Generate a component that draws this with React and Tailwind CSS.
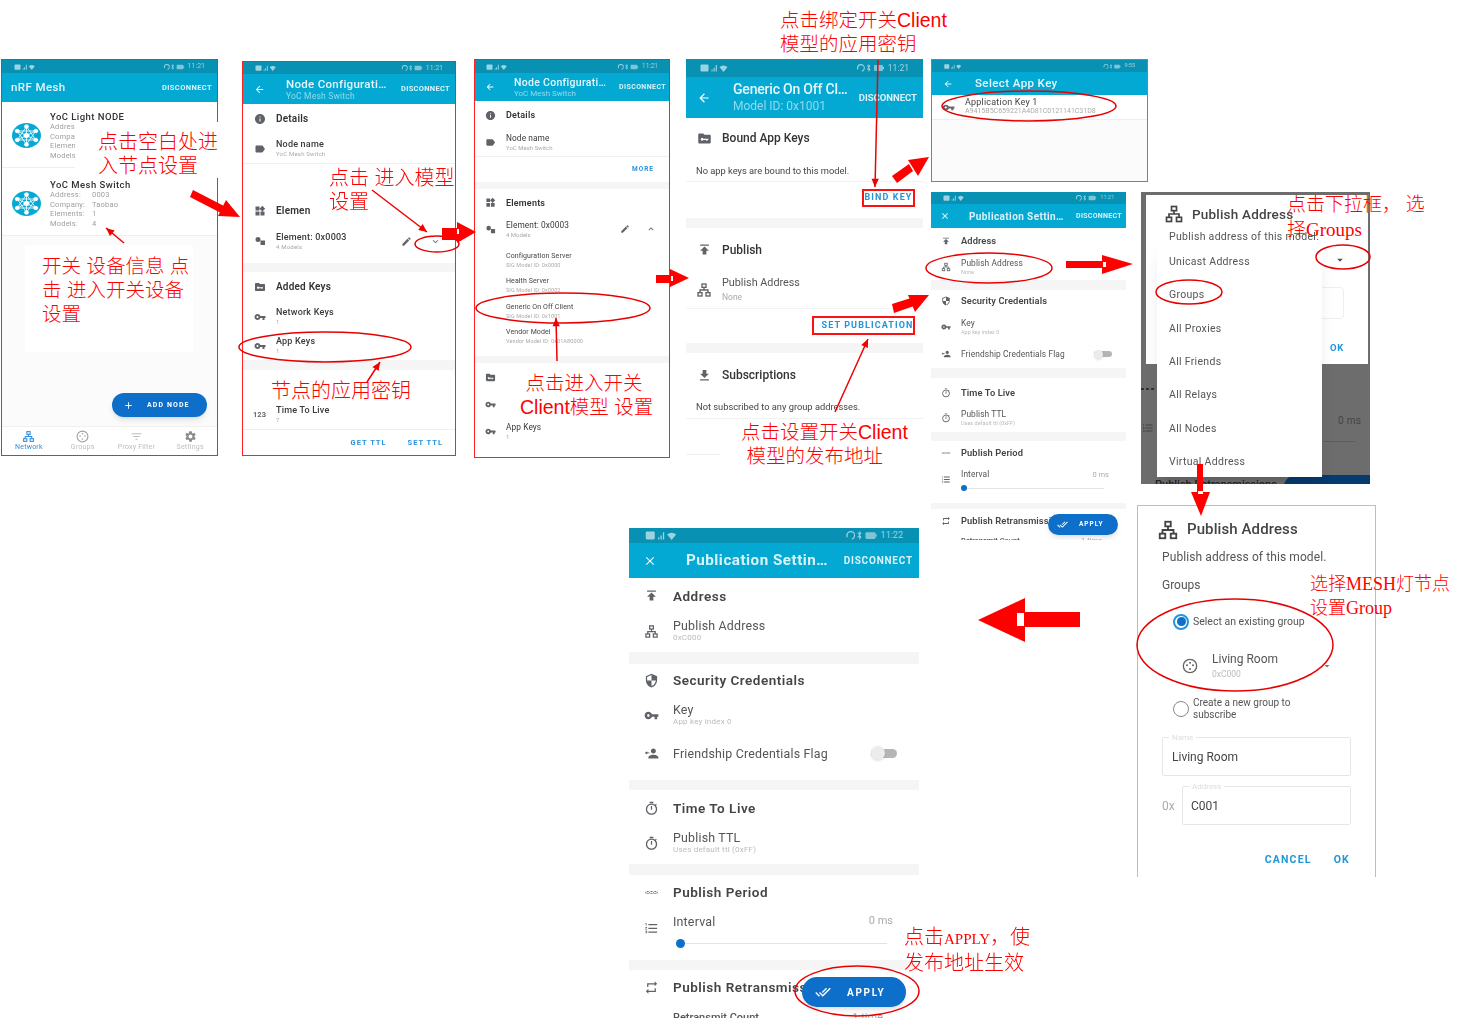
import React from 'react';

const P = {
    info: 'M12 2C6.48 2 2 6.48 2 12s4.48 10 10 10 10-4.48 10-10S17.52 2 12 2zm1 15h-2v-6h2v6zm0-8h-2V7h2v2z',
    label: 'M17.63 5.84C17.27 5.33 16.67 5 16 5L5 5.01C3.9 5.01 3 5.9 3 7v10c0 1.1.9 1.99 2 1.99L16 19c.67 0 1.27-.33 1.63-.84L22 12l-4.37-6.16z',
    widgets: 'M13 13v8h8v-8h-8zM3 21h8v-8H3v8zM3 3v8h8V3H3zm13.66-1.31L11 7.34 16.66 13l5.66-5.66-5.66-5.65z',
    folder: 'M10 4H4c-1.1 0-2 .9-2 2v12c0 1.1.9 2 2 2h16c1.1 0 2-.9 2-2V8c0-1.1-.9-2-2-2h-8l-2-2zM8 11a2.2 2.2 0 0 1 2.1 1.5H18v2h-1.5V16H15v-1.5h-4.9A2.2 2.2 0 1 1 8 11z',
    key: 'M12.65 10C11.83 7.67 9.61 6 7 6c-3.31 0-6 2.69-6 6s2.69 6 6 6c2.61 0 4.83-1.67 5.65-4H17v4h4v-4h2v-4H12.65zM7 14c-1.1 0-2-.9-2-2s.9-2 2-2 2 .9 2 2-.9 2-2 2z',
    pencil: 'M3 17.25V21h3.75L17.81 9.94l-3.75-3.75L3 17.25zM20.71 7.04c.39-.39.39-1.02 0-1.41l-2.34-2.34c-.39-.39-1.02-.39-1.41 0l-1.83 1.83 3.75 3.75 1.83-1.83z',
    down: 'M16.59 8.59L12 13.17 7.41 8.59 6 10l6 6 6-6z',
    drop: 'M7 10l5 5 5-5z',
    up: 'M12 8l-6 6 1.41 1.41L12 10.83l4.59 4.58L18 14z',
    publish: 'M5 4v2h14V4H5zm0 10h4v6h6v-6h4l-7-7-7 7z',
    getApp: 'M19 9h-4V3H9v6H5l7 7 7-7zM5 18v2h14v-2H5z',
    shield: 'M12 1L3 5v6c0 5.55 3.84 10.74 9 12 5.16-1.26 9-6.45 9-12V5l-9-4zm0 10.99h7c-.53 4.12-3.28 7.79-7 8.94V12H5V6.3l7-3.11v8.8z',
    timer: 'M15 1H9v2h6V1zm-4 13h2V8h-2v6zm8.03-6.61l1.42-1.42c-.43-.51-.9-.99-1.41-1.41l-1.42 1.42C16.07 4.74 14.12 4 12 4c-4.97 0-9 4.03-9 9s4.02 9 9 9 9-4.03 9-9c0-2.12-.74-4.07-1.97-5.61zM12 20c-3.87 0-7-3.13-7-7s3.13-7 7-7 7 3.13 7 7-3.13 7-7 7z',
    list: 'M2 17h2v.5H3v1h1v.5H2v1h3v-4H2v1zm1-9h1V4H2v1h1v3zm-1 3h1.8L2 13.1v.9h3v-1H3.2L5 10.9V10H2v1zm5-6v2h14V5H7zm0 14h14v-2H7v2zm0-6h14v-2H7v2z',
    repeat: 'M7 7h10v3l4-4-4-4v3H5v6h2V7zm10 10H7v-3l-4 4 4 4v-3h12v-6h-2v4z',
    done: 'M18 7l-1.41-1.41-6.34 6.34 1.41 1.41L18 7zm4.24-1.41L11.66 16.17 7.48 12l-1.41 1.41L11.66 19l12-12-1.42-1.41zM.41 13.41L6 19l1.41-1.41L1.83 12 .41 13.41z',
    back: 'M20 11H7.83l5.59-5.59L12 4l-8 8 8 8 1.41-1.41L7.83 13H20v-2z',
    close: 'M19 6.41L17.59 5 12 10.59 6.41 5 5 6.41 10.59 12 5 17.59 6.41 19 12 13.41 17.59 19 19 17.59 13.41 12z',
    add: 'M19 13h-6v6h-2v-6H5v-2h6V5h2v6h6v2z',
    filter: 'M10 18h4v-2h-4v2zM3 6v2h18V6H3zm3 7h12v-2H6v2z',
    gear: 'M19.14 12.94c.04-.3.06-.61.06-.94 0-.32-.02-.64-.07-.94l2.03-1.58c.18-.14.23-.41.12-.61l-1.92-3.32c-.12-.22-.37-.29-.59-.22l-2.39.96c-.5-.38-1.03-.7-1.62-.94l-.36-2.54c-.04-.24-.24-.41-.48-.41h-3.84c-.24 0-.43.17-.47.41l-.36 2.54c-.59.24-1.13.57-1.62.94l-2.39-.96c-.22-.08-.47 0-.59.22L2.74 8.87c-.12.21-.08.47.12.61l2.03 1.58c-.05.3-.09.63-.09.94s.02.64.07.94l-2.03 1.58c-.18.14-.23.41-.12.61l1.92 3.32c.12.22.37.29.59.22l2.39-.96c.5.38 1.03.7 1.62.94l.36 2.54c.05.24.24.41.48.41h3.84c.24 0 .44-.17.47-.41l.36-2.54c.59-.24 1.13-.56 1.62-.94l2.39.96c.22.08.47 0 .59-.22l1.92-3.32c.12-.22.07-.47-.12-.61l-2.01-1.58zM12 15.6c-1.98 0-3.6-1.62-3.6-3.6s1.62-3.6 3.6-3.6 3.6 1.62 3.6 3.6-1.62 3.6-3.6 3.6z',
    friend: 'M15 12c2.21 0 4-1.79 4-4s-1.79-4-4-4-4 1.79-4 4 1.79 4 4 4zM15 14c-2.67 0-8 1.34-8 4v2h16v-2c0-2.66-5.33-4-8-4zM4 9a2 2 0 0 1 1.9 1.3H9v1.4H5.9A2 2 0 1 1 4 9z',
    dots: 'M2 11h20v2H2zM6 9.5a2.5 2.5 0 1 0 0 5 2.5 2.5 0 0 0 0-5zM12 9.5a2.5 2.5 0 1 0 0 5 2.5 2.5 0 0 0 0-5zM18 9.5a2.5 2.5 0 1 0 0 5 2.5 2.5 0 0 0 0-5z',
    element: 'M8 4a5 5 0 1 0 0 10 5 5 0 0 0 0-10zM13 11h9v9h-9z',
};

function Ic({ d, c }) {
    return (
        <svg viewBox="0 0 24 24" fill="currentColor" className={c} preserveAspectRatio="none">
            <path d={d} />
        </svg>
    );
}

function Lan({ c }) {
    return (
        <svg viewBox="0 0 24 24" fill="none" stroke="currentColor" strokeWidth="2" className={c}>
            <rect x="9" y="3" width="6" height="5" />
            <rect x="3" y="16" width="6" height="5" />
            <rect x="15" y="16" width="6" height="5" />
            <path d="M12 8v4M6 16v-4h12v4" />
        </svg>
    );
}

function Bubble({ c }) {
    return (
        <svg viewBox="0 0 24 24" fill="none" stroke="currentColor" strokeWidth="2" className={c}>
            <circle cx="12" cy="12" r="10" />
            <circle cx="7.5" cy="11" r="1.5" fill="currentColor" stroke="none" />
            <circle cx="16.5" cy="11" r="1.5" fill="currentColor" stroke="none" />
            <circle cx="12" cy="16.5" r="1.5" fill="currentColor" stroke="none" />
            <circle cx="12" cy="7" r="1.5" fill="currentColor" stroke="none" />
        </svg>
    );
}

function MeshIcon() {
    const pts = [[50, 14], [82, 32], [82, 68], [50, 86], [18, 68], [18, 32]];
    return (
        <svg viewBox="0 0 100 100" preserveAspectRatio="none" className="w-[29px] h-[25px] shrink-0">
            <circle cx="50" cy="50" r="50" fill="#06a9d3" />
            <g stroke="#fff" strokeWidth="3" fill="#fff">
                {pts.map((p, i) => (
                    <g key={i}>
                        <line x1="50" y1="50" x2={p[0]} y2={p[1]} />
                        <line x1={p[0]} y1={p[1]} x2={pts[(i + 2) % 6][0]} y2={pts[(i + 2) % 6][1]} />
                        <circle cx={p[0]} cy={p[1]} r="7" />
                    </g>
                ))}
                <circle cx="50" cy="50" r="9" />
            </g>
        </svg>
    );
}

function StatusBar({ c, icons, text, time }) {
    return (
        <div className={'flex items-center justify-between shrink-0 bg-[#0891b2] text-white/60 ' + c}>
            <svg viewBox="0 0 28 8" fill="currentColor" className={icons}>
                <rect x="0" y="0.5" width="8" height="7" rx="1" />
                <path d="M11 7.5h1v-2h-1zM13 7.5h1.2V4H13zM15.2 7.5h1.2V1h-1.2z" />
                <path d="M19 3a6 6 0 0 1 8 0l-4 5z" />
            </svg>
            <div className="flex items-center gap-[3px]">
                <svg viewBox="0 0 27 8" fill="currentColor" className={icons}>
                    <path d="M4 0a3.8 3.8 0 0 1 3.8 4c0 2-1.2 3.5-3 3.8V6.7c1-.3 2-1.3 2-2.7a2.8 2.8 0 0 0-5.6 0v1.6H0V4a4 4 0 0 1 4-4z" />
                    <path d="M11.5 0l2 2-1.4 1.6 1.4 1.8-2 2.6V4.8L10 6V5l1.5-1.4L10 2V1l1.5 1.3z" />
                    <rect x="17" y="1" width="9" height="6" rx="1" opacity="0.8" />
                    <rect x="26" y="3" width="1" height="2" />
                </svg>
                <span className={'leading-none ' + text}>{time}</span>
            </div>
        </div>
    );
}

function Disconnect({ c }) {
    return <span className={'font-bold text-white/85 leading-none shrink-0 ' + c}>DISCONNECT</span>;
}

function Band({ c }) {
    return <div className={'bg-[#f5f5f5] shrink-0 ' + c} />;
}

// a list row: icon column, then title and optional small line
function Row({ h, col, icon, title, sub, tc, sc, children }) {
    return (
        <div className={'flex items-center shrink-0 ' + h}>
            <div className={'flex justify-center shrink-0 text-[#5f6368] ' + col}>{icon}</div>
            <div className="flex-1 min-w-0 whitespace-nowrap">
                <div className={tc}>{title}</div>
                {sub && <div className={sc}>{sub}</div>}
            </div>
            {children}
        </div>
    );
}

function Note({ c, children }) {
    return <div className={'absolute text-[#ff0000] font-light whitespace-pre font-["Liberation_Sans","Noto_Sans_CJK_SC",sans-serif] ' + c}>{children}</div>;
}

function NodeRow({ name, lines, c }) {
    return (
        <div className={'flex shrink-0 border-b border-[#eeeeee] ' + c}>
            <div className="w-[46px] pl-[10px] shrink-0 pt-[11px]">
                <MeshIcon />
            </div>
            <div className="pl-[2px]">
                <div className="text-[9.5px] font-medium leading-[10px] text-[#333] tracking-[0.45px] whitespace-nowrap">{name}</div>
                {lines.map((l) => (
                    <div key={l[0]} className="flex text-[7.5px] leading-[9.7px] text-[#9e9e9e] tracking-[0.2px]">
                        <span className="w-[42px] shrink-0">{l[0]}</span>
                        <span>{l[1]}</span>
                    </div>
                ))}
            </div>
        </div>
    );
}

function NavItem({ icon, label, c }) {
    return (
        <div className={'flex flex-1 flex-col items-center pt-[3px] ' + c}>
            {icon}
            <span className="text-[7px] leading-[8px] tracking-[0.2px]">{label}</span>
        </div>
    );
}

function ScreenOne() {
    return (
        <div className="absolute left-[1px] top-[59px] w-[217px] h-[397px] border-[1.5px] border-[#ff2020] bg-white flex flex-col overflow-hidden">
            <div className="flex flex-col flex-1 blur-[0.35px] min-h-0">
                <StatusBar c="h-[13px] px-[12px]" icons="h-[6px] w-[22px]" text="text-[7px]" time="11:21" />
                <div className="h-[29px] shrink-0 bg-[#03a9d3] flex items-center justify-between pl-[9px] pr-[5px]">
                    <span className="text-[11.5px] font-medium text-white/90 tracking-[0.4px]">nRF Mesh</span>
                    <Disconnect c="text-[7.5px] tracking-[0.4px]" />
                </div>
                <NodeRow
                    name="YoC Light NODE"
                    c="h-[66px] pt-[10px]"
                    lines={[['Addres', ''], ['Compa', ''], ['Elemen', ''], ['Models', '']]}
                />
                <NodeRow
                    name="YoC Mesh Switch"
                    c="h-[68px] pt-[12px]"
                    lines={[['Address:', '0003'], ['Company:', 'Taobao'], ['Elements:', '1'], ['Models:', '4']]}
                />
                <div className="flex-1 bg-[#fbfbfb]" />
                <div className="h-[29px] shrink-0 flex bg-white border-t border-[#f0f0f0]">
                    <NavItem c="text-[#2f8fe0]" label="Network" icon={<Lan c="w-[13px] h-[13px]" />} />
                    <NavItem c="text-[#bdbdbd]" label="Groups" icon={<Bubble c="w-[13px] h-[13px] text-[#9e9e9e]" />} />
                    <NavItem c="text-[#bdbdbd]" label="Proxy Filter" icon={<Ic d={P.filter} c="w-[13px] h-[13px]" />} />
                    <NavItem c="text-[#bdbdbd]" label="Settings" icon={<Ic d={P.gear} c="w-[13px] h-[13px] text-[#8a8a8a]" />} />
                </div>
            </div>
            <div className="absolute left-[110px] top-[333px] w-[95px] h-[24px] rounded-full bg-[#0d6fc9] shadow-md flex items-center text-white blur-[0.35px]">
                <Ic d={P.add} c="w-[11px] h-[11px] ml-[11px]" />
                <span className="ml-[13px] text-[7px] font-bold tracking-[1.1px]">ADD NODE</span>
            </div>
        </div>
    );
}

const smallRow = {
    col: 'w-[33px]',
    tc: 'text-[9px] leading-[10px] text-[#3a3a3a] font-medium tracking-[0.2px]',
    sc: 'text-[6px] leading-[9px] text-[#a8a8a8] tracking-[0.2px]',
    head: 'text-[10px] leading-[10px] text-[#333] font-semibold tracking-[0.2px]',
};

function SmallBar({ title, sub }) {
    return (
        <div className="shrink-0 flex items-center bg-[#03a9d3] h-[30px] pl-[11px] pr-[5px] text-white">
            <Ic d={P.back} c="w-[11px] h-[11px] shrink-0" />
            <div className="flex-1 pl-[21px] text-white/90">
                <div className="text-[11.5px] leading-[13px] font-medium tracking-[0.3px]">{title}</div>
                <div className="text-[8.5px] leading-[10px] text-white/55 tracking-[0.2px]">{sub}</div>
            </div>
            <Disconnect c="text-[7.5px] tracking-[0.3px]" />
        </div>
    );
}

function ScreenTwo() {
    const s = smallRow;
    const ic = 'w-[12px] h-[12px]';
    return (
        <div className="absolute left-[242px] top-[61px] w-[214px] h-[395px] border-[1.5px] border-[#ff2020] bg-white overflow-hidden">
            <div className="flex flex-col h-full blur-[0.35px]">
                <StatusBar c="h-[12px] px-[12px]" icons="h-[6px] w-[22px]" text="text-[7px]" time="11:21" />
                <SmallBar title="Node Configurati…" sub="YoC Mesh Switch" />
                <Row h="h-[30px]" col={s.col} tc={s.head} title="Details" icon={<Ic d={P.info} c={ic} />} />
                <Row h="h-[30px] border-b border-[#f0f0f0]" col={s.col} tc={s.tc} sc={s.sc} title="Node name" sub="YoC Mesh Switch" icon={<Ic d={P.label} c={ic} />} />
                <div className="h-[32px] shrink-0" />
                <Row h="h-[30px]" col={s.col} tc={s.head} title="Elemen" icon={<Ic d={P.widgets} c={ic} />} />
                <Row h="h-[30px]" col={s.col} tc={s.tc} sc={s.sc} title="Element: 0x0003" sub="4 Models" icon={<Ic d={P.element} c={ic} />}>
                    <Ic d={P.pencil} c="w-[11px] h-[11px] text-[#666] mr-[18px]" />
                    <Ic d={P.down} c="w-[11px] h-[11px] text-[#666] mr-[14px]" />
                </Row>
                <div className="h-[7px] shrink-0" />
                <Band c="h-[9px]" />
                <Row h="h-[30px]" col={s.col} tc={s.head} title="Added Keys" icon={<Ic d={P.folder} c={ic} />} />
                <Row h="h-[29px]" col={s.col} tc={s.tc} sc={s.sc} title="Network Keys" sub="1" icon={<Ic d={P.key} c={ic} />} />
                <Row h="h-[29px]" col={s.col} tc={s.tc} sc={s.sc} title="App Keys" sub="1" icon={<Ic d={P.key} c={ic} />} />
                <Band c="h-[10px]" />
                <div className="h-[30px] shrink-0" />
                <Row h="h-[30px] border-b border-[#f0f0f0]" col={s.col} tc={s.tc} sc={s.sc} title="Time To Live" sub="7" icon={<span className="text-[7.5px] font-bold text-[#666]">123</span>} />
                <div className="h-[25px] shrink-0 flex items-center justify-end pr-[12px] gap-[21px] text-[7.5px] font-bold tracking-[1px] text-[#2a93dc]">
                    <span>GET TTL</span>
                    <span>SET TTL</span>
                </div>
            </div>
        </div>
    );
}

function Model({ title, sub }) {
    return (
        <div className="h-[25.3px] shrink-0 pl-[31px] whitespace-nowrap">
            <div className="text-[7px] leading-[9px] text-[#444] tracking-[0.1px]">{title}</div>
            <div className="text-[5.5px] leading-[8px] text-[#aaa] tracking-[0.1px]">{sub}</div>
        </div>
    );
}

function ScreenThree() {
    const s = {
        col: 'w-[31px]',
        tc: 'text-[8.3px] leading-[10px] text-[#3a3a3a] tracking-[0.1px]',
        head: 'text-[9px] leading-[10px] text-[#333] font-semibold tracking-[0.2px]',
        sc: 'text-[6px] leading-[9px] text-[#a8a8a8]',
    };
    const ic = 'w-[11px] h-[11px]';
    return (
        <div className="absolute left-[474px] top-[59px] w-[196px] h-[399px] border-[1.5px] border-[#ff2020] bg-white overflow-hidden">
            <div className="flex flex-col h-full blur-[0.35px]">
                <StatusBar c="h-[13px] px-[11px]" icons="h-[6px] w-[22px]" text="text-[6.5px]" time="11:21" />
                <div className="shrink-0 flex items-center bg-[#03a9d3] h-[28px] pl-[10px] pr-[3px] text-white">
                    <Ic d={P.back} c="w-[10px] h-[10px] shrink-0" />
                    <div className="flex-1 pl-[19px] text-white/90">
                        <div className="text-[10.5px] leading-[12px] font-medium tracking-[0.3px]">Node Configurati…</div>
                        <div className="text-[8px] leading-[9px] text-white/55">YoC Mesh Switch</div>
                    </div>
                    <Disconnect c="text-[7px] tracking-[0.4px]" />
                </div>
                <Row h="h-[28px]" col={s.col} tc={s.head} title="Details" icon={<Ic d={P.info} c={ic} />} />
                <Row h="h-[28px] border-b border-[#f0f0f0]" col={s.col} tc={s.tc} sc={s.sc} title="Node name" sub="YoC Mesh Switch" icon={<Ic d={P.label} c={ic} />} />
                <div className="h-[25px] shrink-0 flex items-center justify-end pr-[15px] text-[6.5px] font-bold tracking-[1px] text-[#2a93dc]">MORE</div>
                <Band c="h-[7px]" />
                <Row h="h-[27px]" col={s.col} tc={s.head} title="Elements" icon={<Ic d={P.widgets} c={ic} />} />
                <Row h="h-[26px]" col={s.col} tc={s.tc} sc={s.sc} title="Element: 0x0003" sub="4 Models" icon={<Ic d={P.element} c={ic} />}>
                    <Ic d={P.pencil} c="w-[10px] h-[10px] text-[#666] mr-[16px]" />
                    <Ic d={P.up} c="w-[10px] h-[10px] text-[#666] mr-[13px]" />
                </Row>
                <div className="h-[10px] shrink-0" />
                <Model title="Configuration Server" sub="SIG Model ID: 0x0000" />
                <Model title="Health Server" sub="SIG Model ID: 0x0002" />
                <Model title="Generic On Off Client" sub="SIG Model ID: 0x1001" />
                <Model title="Vendor Model" sub="Vendor Model ID: 0x01A80000" />
                <div className="h-[3px] shrink-0" />
                <Band c="h-[7px]" />
                <Row h="h-[28px]" col={s.col} tc={s.head} title="" icon={<Ic d={P.folder} c={ic} />} />
                <Row h="h-[27px]" col={s.col} tc={s.tc} title="" icon={<Ic d={P.key} c={ic} />} />
                <Row h="h-[26px]" col={s.col} tc={s.tc} sc={s.sc} title="App Keys" sub="1" icon={<Ic d={P.key} c={ic} />} />
            </div>
        </div>
    );
}

function ScreenFour() {
    const col = 'w-[36px]';
    const head = 'text-[12px] leading-[14px] font-medium text-[#333]';
    const ic = 'w-[15px] h-[15px]';
    return (
        <div className="absolute left-[686px] top-[59px] w-[237px] h-[402px] bg-white overflow-hidden flex flex-col blur-[0.35px]">
            <StatusBar c="h-[18px] px-[14px]" icons="h-[8px] w-[29px]" text="text-[8.5px]" time="11:21" />
            <div className="h-[41px] shrink-0 bg-[#03a9d3] flex items-center pl-[11px] pr-[6px] text-white">
                <Ic d={P.back} c="w-[14px] h-[14px] shrink-0" />
                <div className="flex-1 min-w-0 pl-[22px] whitespace-nowrap">
                    <div className="text-[14px] leading-[17px] font-medium text-white/90 tracking-[-0.2px]">Generic On Off Cl…</div>
                    <div className="text-[12px] leading-[16px] text-white/55">Model ID: 0x1001</div>
                </div>
                <Disconnect c="text-[9.5px]" />
            </div>
            <Row h="h-[40px]" col={col} tc={head} title="Bound App Keys" icon={<Ic d={P.folder} c={ic} />} />
            <div className="h-[24px] shrink-0 pl-[10px] pt-[6px] text-[9.3px] leading-[14px] text-[#444] border-b border-[#f2f2f2]">No app keys are bound to this model.</div>
            <div className="h-[36px] shrink-0 flex justify-end pt-[7px] pr-[8px]">
                <div className="w-[53px] h-[18px] border-2 border-[#ff1010] flex items-center justify-center text-[9px] font-bold tracking-[1.1px] text-[#2196d9]">BIND KEY</div>
            </div>
            <Band c="h-[10px]" />
            <Row h="h-[43px]" col={col} tc={head} title="Publish" icon={<Ic d={P.publish} c={ic} />} />
            <Row h="h-[38px] border-b border-[#f2f2f2]" col={col} tc="text-[10.8px] leading-[14px] text-[#555]" sc="text-[8.5px] leading-[14px] text-[#aaa]" title="Publish Address" sub="None" icon={<Lan c="w-[16px] h-[16px]" />} />
            <div className="h-[34px] shrink-0 flex justify-end pt-[7px] pr-[8px]">
                <div className="w-[103px] h-[19px] border-2 border-[#ff1010] flex items-center justify-center pl-[8px] text-[9px] font-bold tracking-[1.1px] text-[#2196d9] whitespace-nowrap">SET PUBLICATION</div>
            </div>
            <Band c="h-[10px]" />
            <Row h="h-[44px]" col={col} tc={head} title="Subscriptions" icon={<Ic d={P.getApp} c={ic} />} />
            <div className="h-[22px] shrink-0 pl-[10px] text-[9.3px] leading-[20px] text-[#444] border-b border-[#f2f2f2] whitespace-nowrap">Not subscribed to any group addresses.</div>
            <div className="h-[36px] shrink-0 border-b border-[#f0f0f0]" />
        </div>
    );
}

function ScreenFive() {
    return (
        <div className="absolute left-[931px] top-[59px] w-[217px] h-[123px] border-[1.5px] border-[#ff4a4a] bg-[#fbfbfb] overflow-hidden">
            <div className="flex flex-col blur-[0.35px]">
                <StatusBar c="h-[12px] px-[12px]" icons="h-[5px] w-[18px]" text="text-[5.5px]" time="9:55" />
                <div className="h-[23px] shrink-0 bg-[#03a9d3] flex items-center pl-[11px] text-white/90">
                    <Ic d={P.back} c="w-[10px] h-[10px]" />
                    <span className="ml-[22px] text-[11.5px] font-medium tracking-[0.4px]">Select App Key</span>
                </div>
                <div className="h-[25px] shrink-0 bg-white border-b border-[#eeeeee] flex items-center pl-[10px]">
                    <Ic d={P.key} c="w-[13px] h-[11px] text-[#666] shrink-0" />
                    <div className="pl-[10px] whitespace-nowrap">
                        <div className="text-[9px] leading-[9px] text-[#444] tracking-[0.2px]">Application Key 1</div>
                        <div className="text-[7px] leading-[9px] text-[#aaa]">A9415B5C659221A4D81C0121141C31D8</div>
                    </div>
                </div>
            </div>
        </div>
    );
}

const pubSmall = {
    root: 'left-[931px] top-[192px] w-[195px] h-[348px]',
    status: 'h-[12px] px-[12px]', sIcons: 'h-[6px] w-[22px]', sText: 'text-[5.5px]',
    bar: 'h-[24px] pl-[9px] pr-[4px]', close: 'w-[10px] h-[10px]', title: 'pl-[19px] text-[10px] tracking-[0.4px]', disc: 'text-[7px] tracking-[0.3px]',
    col: 'w-[30px]', head: 'text-[9.3px] leading-[10px] font-semibold text-[#444] tracking-[0.1px]', item: 'text-[8.4px] leading-[9px] text-[#555] tracking-[0.1px]', sub: 'text-[5.5px] leading-[8px] text-[#bbb]',
    ic: 'w-[10px] h-[10px]',
    address: 'h-[26px]', pa: 'h-[26px]', band1: 'h-[10px]', sec: 'h-[22px]', key: 'h-[30px]', friend: 'h-[24px]', gap1: 'h-[2px]', band2: 'h-[10px]', ttl: 'h-[30px]', pttl: 'h-[20px]', gap2: 'h-[4px]', band3: 'h-[9px]', period: 'h-[24px]',
    interval: 'h-[38px]', intTop: 'pt-[4px] pr-[17px]', zero: 'text-[7.5px]', track: 'ml-[30px] mr-[22px] mt-[8px] h-[1px]', dot: 'w-[6px] h-[6px] -top-[3px]', band4: 'h-[6px]', retr: 'h-[24px]',
    toggle: 'w-[18px] h-[6px] mr-[14px]', knob: 'w-[9px] h-[9px]',
    fab: 'left-[117px] top-[322px] w-[70px] h-[21px] text-[6.5px]', fabIc: 'w-[11px] h-[11px] ml-[9px]', fabT: 'ml-[11px] tracking-[1px]',
    last: 'text-[7.5px] pl-[30px] pr-[24px] mt-[4px]',
};

const pubBig = {
    root: 'left-[629px] top-[528px] w-[290px] h-[490px]',
    status: 'h-[15px] px-[16px]', sIcons: 'h-[9px] w-[33px]', sText: 'text-[9px]',
    bar: 'h-[35px] pl-[14px] pr-[6px]', close: 'w-[14px] h-[14px]', title: 'pl-[29px] text-[15.2px] tracking-[0.5px]', disc: 'text-[10px] tracking-[0.8px]',
    col: 'w-[44px]', head: 'text-[13.5px] leading-[14px] font-semibold text-[#444] tracking-[0.5px]', item: 'text-[12.4px] leading-[13px] text-[#555] tracking-[0.2px]', sub: 'text-[8px] leading-[11px] text-[#bbb] tracking-[0.2px]',
    ic: 'w-[15px] h-[15px]',
    address: 'h-[35px]', pa: 'h-[36px] mb-[3px]', band1: 'h-[12px]', sec: 'h-[32px]', key: 'h-[38px]', friend: 'h-[38px]', gap1: 'h-[8px]', band2: 'h-[10px]', ttl: 'h-[36px]', pttl: 'h-[34px]', gap2: 'h-[4px]', band3: 'h-[11px]', period: 'h-[34px]',
    interval: 'h-[51px]', intTop: 'pt-[4px] pr-[26px]', zero: 'text-[11px]', track: 'ml-[47px] mr-[32px] mt-[13px] h-[1px]', dot: 'w-[9px] h-[9px] -top-[4px]', band4: 'h-[10px]', retr: 'h-[34px]',
    toggle: 'w-[26px] h-[9px] mr-[22px]', knob: 'w-[14px] h-[14px]',
    fab: 'left-[173px] top-[449px] w-[104px] h-[30px] text-[10px]', fabIc: 'w-[16px] h-[16px] ml-[13px]', fabT: 'ml-[16px] tracking-[1.7px]',
    last: 'text-[11px] pl-[44px] pr-[36px] mt-[8px]',
};

function Publication({ s, time, address }) {
    return (
        <div className={'absolute bg-white overflow-hidden ' + s.root}>
            <div className="flex flex-col blur-[0.35px]">
                <StatusBar c={s.status} icons={s.sIcons} text={s.sText} time={time} />
                <div className={'shrink-0 bg-[#03a9d3] flex items-center ' + s.bar}>
                    <Ic d={P.close} c={'text-white shrink-0 ' + s.close} />
                    <div className={'flex-1 font-bold text-white/85 whitespace-nowrap ' + s.title}>Publication Settin…</div>
                    <Disconnect c={s.disc} />
                </div>
                <Row h={s.address} col={s.col} tc={s.head} title="Address" icon={<Ic d={P.publish} c={s.ic} />} />
                <Row h={s.pa} col={s.col} tc={s.item} sc={s.sub} title="Publish Address" sub={address} icon={<Lan c={s.ic} />} />
                <Band c={s.band1} />
                <Row h={s.sec} col={s.col} tc={s.head} title="Security Credentials" icon={<Ic d={P.shield} c={s.ic} />} />
                <Row h={s.key} col={s.col} tc={s.item} sc={s.sub} title="Key" sub="App key index 0" icon={<Ic d={P.key} c={s.ic} />} />
                <Row h={s.friend} col={s.col} tc={s.item} title="Friendship Credentials Flag" icon={<Ic d={P.friend} c={s.ic} />}>
                    <div className={'relative shrink-0 rounded-full bg-[#b5b5b5] flex items-center ' + s.toggle}>
                        <div className={'rounded-full bg-[#ececec] shadow-sm ' + s.knob} />
                    </div>
                </Row>
                <div className={'shrink-0 ' + s.gap1} />
                <Band c={s.band2} />
                <Row h={s.ttl} col={s.col} tc={s.head} title="Time To Live" icon={<Ic d={P.timer} c={s.ic} />} />
                <Row h={s.pttl} col={s.col} tc={s.item} sc={s.sub} title="Publish TTL" sub="Uses default ttl (0xFF)" icon={<Ic d={P.timer} c={s.ic} />} />
                <div className={'shrink-0 ' + s.gap2} />
                <Band c={s.band3} />
                <Row h={s.period} col={s.col} tc={s.head} title="Publish Period" icon={<Ic d={P.dots} c={s.ic} />} />
                <div className={'relative shrink-0 ' + s.interval}>
                    <div className={'flex items-center ' + s.intTop}>
                        <div className={'flex justify-center shrink-0 text-[#5f6368] translate-y-[45%] ' + s.col}>
                            <Ic d={P.list} c={s.ic} />
                        </div>
                        <span className={'flex-1 ' + s.item}>Interval</span>
                        <span className={'text-[#aaa] ' + s.zero}>0 ms</span>
                    </div>
                    <div className={'relative bg-[#e3e3e3] ' + s.track}>
                        <div className={'absolute left-0 rounded-full bg-[#0d6fc9] ' + s.dot} />
                    </div>
                </div>
                <Band c={s.band4} />
                <Row h={s.retr} col={s.col} tc={s.head} title="Publish Retransmissions" icon={<Ic d={P.repeat} c={s.ic} />} />
                <div className={'flex justify-between font-medium text-[#555] whitespace-nowrap leading-none ' + s.last}>
                    <span>Retransmit Count</span>
                    <span className="font-normal text-[#aaa]">1 time</span>
                </div>
            </div>
            <div className={'absolute rounded-full bg-[#0d6fc9] shadow-md flex items-center text-white font-bold blur-[0.35px] ' + s.fab}>
                <Ic d={P.done} c={s.fabIc} />
                <span className={s.fabT}>APPLY</span>
            </div>
        </div>
    );
}

function MenuDialog() {
    const items = ['Unicast Address', 'Groups', 'All Proxies', 'All Friends', 'All Relays', 'All Nodes', 'Virtual Address'];
    return (
        <div className="absolute left-[1141px] top-[192px] w-[229px] h-[292px] bg-[#6d6d6d] overflow-hidden">
            <div className="absolute left-[5px] top-[3px] w-[222px] h-[169px] bg-white blur-[0.3px]">
                <div className="flex items-center pl-[18px] pt-[9px] text-[#444]">
                    <Lan c="w-[20px] h-[20px]" />
                    <span className="ml-[8px] text-[13.5px] font-medium tracking-[0.2px]">Publish Address</span>
                </div>
                <div className="pl-[23px] pt-[6px] text-[10.5px] leading-[14px] text-[#555] tracking-[0.3px] whitespace-nowrap">Publish address of this model.</div>
                <Ic d={P.drop} c="absolute left-[187px] top-[58px] w-[14px] h-[14px] text-[#555]" />
                <div className="absolute left-[160px] top-[92px] w-[38px] h-[32px] border border-[#eeeeee] rounded-sm" />
                <span className="absolute left-[184px] top-[146px] text-[9.5px] font-bold text-[#2196d9] tracking-[0.8px]">OK</span>
            </div>
            <div className="absolute left-0 top-[196px] flex gap-[2px]">
                <span className="w-[3px] h-[2px] bg-[#333]" />
                <span className="w-[3px] h-[2px] bg-[#333]" />
                <span className="w-[3px] h-[2px] bg-[#333]" />
            </div>
            <span className="absolute left-[197px] top-[221px] text-[10px] text-[#444] tracking-[0.3px]">0 ms</span>
            <div className="absolute left-[182px] top-[249px] w-[32px] h-[1px] bg-[#5e5e5e]" />
            <span className="absolute left-[14px] top-[286px] text-[11px] leading-[13px] font-medium text-[#222] whitespace-nowrap">Publish Retransmissions</span>
            <div className="absolute left-[142px] top-[283px] w-[87px] h-[20px] rounded-tl-[14px] bg-[#063a70]" />
            <Ic d={P.list} c="absolute left-[1px] top-[230px] w-[12px] h-[12px] text-[#444]" />
            <div className="absolute left-[16px] top-[52px] w-[165px] h-[233px] bg-white shadow-lg flex flex-col pt-[1px] blur-[0.3px]">
                {items.map((t) => (
                    <div key={t} className="h-[33.4px] shrink-0 flex items-center pl-[12px] text-[10.5px] text-[#555] tracking-[0.3px]">{t}</div>
                ))}
            </div>
        </div>
    );
}

function GroupDialog() {
    return (
        <div className="absolute left-[1137px] top-[505px] w-[239px] h-[372px] border-t border-x border-[#bdbdbd] bg-white">
            <div className="flex flex-col blur-[0.3px] text-[#555]">
                <div className="flex items-center pl-[19px] pt-[10px] h-[37px] shrink-0 text-[#444]">
                    <Lan c="w-[22px] h-[22px]" />
                    <span className="ml-[8px] text-[15px] font-medium tracking-[0.1px]">Publish Address</span>
                </div>
                <div className="pl-[24px] pt-[5px] h-[27px] shrink-0 text-[12px] leading-[18px] tracking-[0.1px]">Publish address of this model.</div>
                <div className="pl-[24px] pt-[6px] h-[33px] shrink-0 text-[12px] leading-[18px]">Groups</div>
                <div className="h-[37px] shrink-0 pl-[35px] flex items-center">
                    <div className="w-[16px] h-[16px] rounded-full border-[2px] border-[#2196d9] flex items-center justify-center">
                        <div className="w-[9px] h-[9px] rounded-full bg-[#0d6fc9]" />
                    </div>
                    <span className="ml-[4px] text-[10.5px]">Select an existing group</span>
                </div>
                <div className="h-[52px] shrink-0 pl-[44px] flex items-center">
                    <Bubble c="w-[16px] h-[16px] text-[#666]" />
                    <div className="ml-[14px]">
                        <div className="text-[12px] leading-[16px]">Living Room</div>
                        <div className="text-[8.5px] leading-[14px] text-[#bbb]">0xC000</div>
                    </div>
                    <Ic d={P.drop} c="ml-auto mr-[42px] w-[12px] h-[12px] text-[#777]" />
                </div>
                <div className="h-[34px] shrink-0 pl-[35px] flex items-center">
                    <div className="w-[16px] h-[16px] rounded-full border-[1.5px] border-[#888]" />
                    <span className="ml-[4px] text-[10px] leading-[12px]">Create a new group to<br />subscribe</span>
                </div>
                <div className="pt-[11px] pl-[24px] pr-[24px]">
                    <div className="relative h-[39px] border border-[#e6e6e6] rounded-[2px] flex items-center pl-[9px] text-[12px] text-[#444]">
                        <span className="absolute left-[6px] -top-[5px] bg-white px-[3px] text-[8px] leading-[9px] text-[#ddd]">Name</span>
                        Living Room
                    </div>
                    <div className="flex items-center mt-[10px]">
                        <span className="w-[20px] text-[12px] text-[#aaa]">0x</span>
                        <div className="relative flex-1 h-[39px] border border-[#e6e6e6] rounded-[2px] flex items-center pl-[8px] text-[12px] text-[#444]">
                            <span className="absolute left-[6px] -top-[5px] bg-white px-[3px] text-[8px] leading-[9px] text-[#ddd]">Address</span>
                            C001
                        </div>
                    </div>
                </div>
                <div className="flex justify-end gap-[22px] pr-[25px] pt-[27px] text-[10.5px] font-bold tracking-[1.2px] text-[#2196d9]">
                    <span>CANCEL</span>
                    <span>OK</span>
                </div>
            </div>
        </div>
    );
}

function Arrow({ a, b, w = 1.5 }) {
    // thin line with a small head at b
    const ang = Math.atan2(b[1] - a[1], b[0] - a[0]);
    const l = 9;
    const p1 = [b[0] - l * Math.cos(ang - 0.42), b[1] - l * Math.sin(ang - 0.42)];
    const p2 = [b[0] - l * Math.cos(ang + 0.42), b[1] - l * Math.sin(ang + 0.42)];
    return (
        <g>
            <line x1={a[0]} y1={a[1]} x2={b[0]} y2={b[1]} stroke="#f00000" strokeWidth={w} />
            <polygon points={`${b[0]},${b[1]} ${p1[0]},${p1[1]} ${p2[0]},${p2[1]}`} fill="#f00000" />
        </g>
    );
}

function Overlay() {
    const ellipses = [
        [325, 347, 86, 15], [437, 244, 22, 8], [563, 308, 87, 15], [1029, 106, 87, 15],
        [989, 268, 63, 15], [1343, 257, 27, 12], [1189, 292, 33, 12], [1235, 645, 98, 46], [857, 991, 62, 25],
    ];
    return (
        <svg viewBox="0 0 1460 1018" className="absolute left-0 top-0 w-[1460px] h-[1018px] pointer-events-none">
            {ellipses.map((e) => (
                <ellipse key={e[0]} cx={e[0]} cy={e[1]} rx={e[2]} ry={e[3]} fill="none" stroke="#e80000" strokeWidth="1.5" />
            ))}
            <Arrow a={[124, 243]} b={[106, 228]} />
            <Arrow a={[372, 190]} b={[427, 232]} />
            <Arrow a={[367, 382]} b={[380, 362]} />
            <Arrow a={[878, 60]} b={[875, 187]} />
            <Arrow a={[835, 412]} b={[868, 339]} />
            <Arrow a={[557, 361]} b={[556, 318]} />
            <g fill="#ff0000">
                {/* thick diagonal arrows */}
                <polygon points="190,197 193,190 224,206 221,213" />
                <polygon points="226,200 240,217 218,216" />
                <polygon points="892,176 909,164 913,171 897,183" />
                <polygon points="908,160 929,157 918,176" />
                <polygon points="892,304 911,298 914,306 894,313" />
                <polygon points="908,295 929,295 915,312" />
                {/* block arrows */}
                <polygon points="442,228 457,228 457,222 476,232 457,243 457,240 442,240" />
                <polygon points="656,275 670,275 670,269 689,278 670,287 670,283 656,283" />
                <polygon points="1066,261 1102,261 1102,255 1133,264 1102,274 1102,268 1066,268" />
                <polygon points="1197,464 1203,464 1203,492 1210,492 1201,516 1191,492 1197,492" />
                <polygon points="1080,612 1025,612 1025,598 978,620 1025,642 1025,627 1080,627" />
            </g>
            <g fill="#ffffff">
                <rect x="457" y="229" width="2" height="5" />
                <rect x="671" y="276" width="2" height="5" />
                <rect x="1103" y="262" width="3" height="5" />
                <rect x="1198" y="491" width="5" height="3" />
                <rect x="1017" y="613" width="7" height="13" />
            </g>
        </svg>
    );
}

export default function App() {
    return (
        <div className="relative w-[1460px] h-[1018px] bg-white overflow-hidden font-['Roboto',sans-serif]">
            <ScreenOne />
            <ScreenTwo />
            <ScreenThree />
            <ScreenFour />
            <ScreenFive />
            <Publication s={pubSmall} time="11:21" address="None" />
            <Publication s={pubBig} time="11:22" address="0xC000" />
            <MenuDialog />
            <GroupDialog />

            <Note c="left-[75px] top-[122px] w-[144px] h-[56px] bg-white pl-[23px] pt-[8px] text-[20px] leading-[24px]">{'点击空白处进\n入节点设置'}</Note>
            <Note c="left-[25px] top-[245px] w-[168px] h-[107px] bg-white pl-[17px] pt-[9px] text-[19.5px] leading-[24px]">{'开关 设备信息 点\n击 进入开关设备\n设置'}</Note>
            <Note c="left-[313px] top-[165px] w-[141px] h-[49px] bg-white pl-[16px] pt-[1px] text-[20px] leading-[24px]">{'点击 进入模型\n设置'}</Note>
            <Note c="left-[262px] top-[378px] w-[160px] h-[27px] bg-white pl-[9px] pt-[1px] text-[20px] leading-[24px]">节点的应用密钥</Note>
            <Note c="left-[510px] top-[368px] w-[150px] h-[52px] bg-white pl-[10px] pt-[3px] text-[19.5px] leading-[24px]">{' 点击进入开关\nClient模型 设置'}</Note>
            <Note c="left-[780px] top-[8px] text-[19.5px] leading-[24px]">{'点击绑定开关Client\n模型的应用密钥'}</Note>
            <Note c="left-[720px] top-[420px] w-[203px] h-[48px] bg-white pl-[21px] text-[19.5px] leading-[24px]">{'点击设置开关Client\n 模型的发布地址'}</Note>
            <Note c="left-[1287px] top-[192px] text-[19px] leading-[25px] font-['Liberation_Serif','Noto_Sans_CJK_SC',serif]">{'点击下拉框， 选\n择Groups'}</Note>
            <Note c="left-[1310px] top-[572px] text-[18px] leading-[24px] font-['Liberation_Serif','Noto_Sans_CJK_SC',serif]">{'选择MESH灯节点\n设置Group'}</Note>
            <Note c="left-[904px] top-[925px] text-[20px] leading-[24px] font-['Liberation_Serif','Noto_Sans_CJK_SC',serif]">
                点击<span className="text-[15px]">APPLY</span>，使{'\n'}发布地址生效
            </Note>

            <Overlay />
        </div>
    );
}
